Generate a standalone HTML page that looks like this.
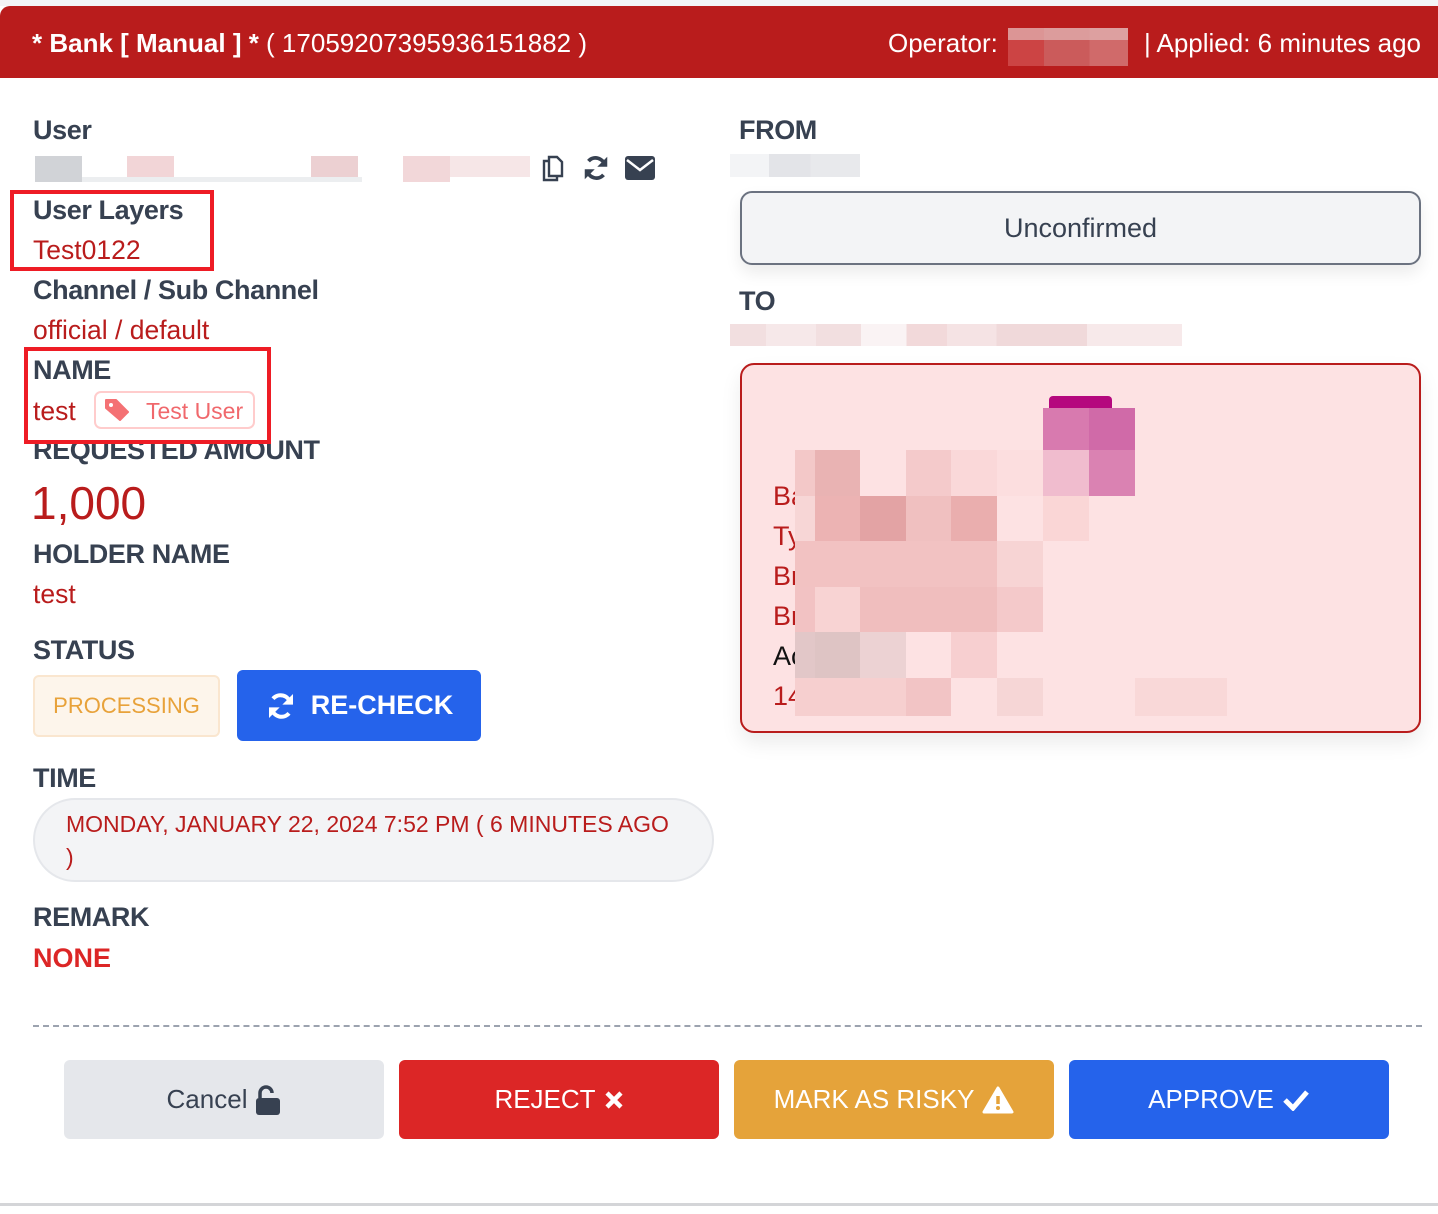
<!DOCTYPE html>
<html><head><meta charset="utf-8"><style>
*{margin:0;padding:0;box-sizing:border-box}
body{width:1438px;height:1214px;background:#fff;position:relative;overflow:hidden;font-family:"Liberation Sans",sans-serif}
.a{position:absolute;white-space:nowrap;line-height:1}
.lb{font-size:27px;font-weight:bold;color:#374151;letter-spacing:-0.4px}
.rv{font-size:26.5px;color:#b91c1c}
.c{position:absolute}
.btn{position:absolute;top:1060px;width:320px;height:79px;border-radius:6px;display:flex;align-items:center;justify-content:center;font-size:26px;color:#fff;gap:8px}
</style></head><body>
<div class="c" style="left:0;top:0;width:1438px;height:6px;background:#f3f4f6"></div>
<div class="c" style="left:0;top:6px;width:1438px;height:72px;background:#b91c1c;border-radius:10px 0 0 0"></div>
<div class="a" style="left:32px;top:30px;font-size:26px;color:#fff"><b>* Bank [ Manual ] *</b> ( 1705920739593615188​2 )</div>
<div class="a" style="left:888px;top:30px;font-size:26px;color:#fff">Operator:</div>
<div class="c" style="left:1008px;top:28px;width:120px;height:38px;background:linear-gradient(90deg,#c44 0 30%,#cb5b5b 30% 68%,#d06a6a 68%)"></div>
<div class="c" style="left:1008px;top:28px;width:120px;height:12px;background:#e3b8b8;opacity:.7"></div>
<div class="a" style="right:17px;top:30px;font-size:26px;color:#fff">| Applied: 6 minutes ago</div>

<!-- left column -->
<div class="a lb" style="left:33px;top:117px">User</div>
<div class="c" style="left:35px;top:156px;width:495px;height:26px">
 <div class="c" style="left:0;top:0;width:47px;height:26px;background:#d1d3d7"></div>
 <div class="c" style="left:47px;top:21px;width:280px;height:5px;background:#eceef0"></div>
 <div class="c" style="left:92px;top:0;width:47px;height:21px;background:#f2d5d7"></div>
 <div class="c" style="left:276px;top:0;width:47px;height:21px;background:#ecd0d2"></div>
 <div class="c" style="left:368px;top:0;width:47px;height:26px;background:#f2d7d9"></div>
 <div class="c" style="left:415px;top:0;width:80px;height:21px;background:#f6e6e7"></div>
</div>
<svg class="c" style="left:540px;top:154px" width="28" height="28" viewBox="0 0 28 28"><path d="M9 3h8l5 5v14H9z" fill="none" stroke="#374151" stroke-width="2.4"/><path d="M9 7H4v19h13v-4" fill="none" stroke="#374151" stroke-width="2.4"/></svg>
<svg class="c" style="left:581px;top:153px" width="30" height="30" viewBox="0 0 24 24"><path d="M19 10A7.5 7.5 0 0 0 6 6.5" fill="none" stroke="#374151" stroke-width="3"/><path d="M21 3v8h-8z" fill="#374151"/><path d="M5 14a7.5 7.5 0 0 0 13 3.5" fill="none" stroke="#374151" stroke-width="3"/><path d="M3 21v-8h8z" fill="#374151"/></svg>
<svg class="c" style="left:625px;top:156px" width="30" height="24" viewBox="0 0 30 24"><rect x="0" y="0" width="30" height="24" rx="3" fill="#374151"/><path d="M2 4l13 10 13-10" fill="none" stroke="#fff" stroke-width="2.5"/></svg>

<div class="a lb" style="left:33px;top:197px">User Layers</div>
<div class="a rv" style="left:33px;top:237px">Test0122</div>
<div class="c" style="left:10px;top:190px;width:204px;height:81px;border:4px solid #ee1c25"></div>

<div class="a lb" style="left:33px;top:277px">Channel / Sub Channel</div>
<div class="a rv" style="left:33px;top:317px">official / default</div>

<div class="a lb" style="left:33px;top:437px">REQUESTED AMOUNT</div>
<div class="c" style="left:28px;top:351px;width:238px;height:90px;background:#fff"></div>
<div class="a lb" style="left:33px;top:357px">NAME</div>
<div class="a rv" style="left:33px;top:398px">test</div>
<div class="c" style="left:94px;top:391px;width:161px;height:38px;border:2px solid #fcc;border-radius:7px"></div>
<svg class="c" style="left:104px;top:398px" width="26" height="24" viewBox="0 0 26 24"><path d="M2 2h10l12 12-8 8L2 10z" fill="#f47174" stroke="#f47174" stroke-linejoin="round" stroke-width="2"/><circle cx="7" cy="7" r="2" fill="#fff"/></svg>
<div class="a" style="left:146px;top:400px;font-size:23px;color:#f0686c">Test User</div>
<div class="c" style="left:24px;top:347px;width:247px;height:97px;border:4px solid #ee1c25"></div>

<div class="a" style="left:31px;top:480px;font-size:46px;color:#b91c1c">1,000</div>
<div class="a lb" style="left:33px;top:541px">HOLDER NAME</div>
<div class="a rv" style="left:33px;top:581px">test</div>
<div class="a lb" style="left:33px;top:637px">STATUS</div>
<div class="c" style="left:33px;top:675px;width:187px;height:62px;background:#fdf5eb;border:2px solid #fae6cf;border-radius:6px;display:flex;align-items:center;justify-content:center;font-size:22px;color:#e8a23a">PROCESSING</div>
<div class="c" style="left:237px;top:670px;width:244px;height:71px;background:#2563eb;border-radius:6px;display:flex;align-items:center;justify-content:center;gap:14px;color:#fff;font-size:27px;font-weight:bold">
<svg width="32" height="32" viewBox="0 0 24 24"><path d="M19 10A7.5 7.5 0 0 0 6 6.5" fill="none" stroke="#fff" stroke-width="3"/><path d="M21 3v8h-8z" fill="#fff"/><path d="M5 14a7.5 7.5 0 0 0 13 3.5" fill="none" stroke="#fff" stroke-width="3"/><path d="M3 21v-8h8z" fill="#fff"/></svg>RE-CHECK</div>
<div class="a lb" style="left:33px;top:765px">TIME</div>
<div class="c" style="left:33px;top:798px;width:681px;height:84px;background:#f3f4f6;border:2px solid #e5e7eb;border-radius:42px"></div>
<div class="a" style="left:66px;top:813px;font-size:23px;color:#b91c1c">MONDAY, JANUARY 22, 2024 7:52 PM ( 6 MINUTES AGO</div>
<div class="a" style="left:66px;top:846px;font-size:23px;color:#b91c1c">)</div>
<div class="a lb" style="left:33px;top:904px">REMARK</div>
<div class="a" style="left:33px;top:945px;font-size:27px;font-weight:bold;color:#dc2626">NONE</div>

<!-- right column -->
<div class="a lb" style="left:739px;top:117px">FROM</div>
<div class="c" style="left:730px;top:154px;width:130px;height:23px;background:linear-gradient(90deg,#f3f4f6 0 30%,#e3e4e8 30% 62%,#e8e9ec 62%)"></div>
<div class="c" style="left:740px;top:191px;width:681px;height:74px;background:#f3f4f6;border:2px solid #6b7280;border-radius:12px;display:flex;align-items:center;justify-content:center;font-size:27px;color:#374151;box-shadow:0 8px 16px rgba(0,0,0,.08)">Unconfirmed</div>
<div class="a lb" style="left:739px;top:288px">TO</div>
<div class="c" style="left:730px;top:324px;width:452px;height:22px;background:linear-gradient(90deg,#f2dfe0 0 8%,#f6e8e9 8% 19%,#f2dfe0 19% 29%,#faf3f4 29% 39%,#f2d9da 39% 48%,#f5e3e4 48% 59%,#f0d9da 59% 79%,#f7e9ea 79%)"></div>
<div class="c" style="left:740px;top:363px;width:681px;height:370px;background:#fde2e3;border:2px solid #b91c1c;border-radius:14px;box-shadow:0 10px 20px rgba(0,0,0,.08)"></div>
<div class="a" style="left:773px;top:476px;font-size:27px;color:#b91c1c;line-height:40px">Ba<br>Ty<br>Br<br>Br<br><span style="color:#111">Ac</span><br>14</div>
<div class="c" style="left:1049px;top:396px;width:63px;height:20px;background:#b5087e;border-radius:4px"></div>
<div class="c" style="left:795px;top:408px;width:440px;height:308px">
 <div class="c" style="left:248px;top:0;width:46px;height:42px;background:#d87aaf"></div>
 <div class="c" style="left:294px;top:0;width:46px;height:42px;background:#d06aa8"></div>
 <div class="c" style="left:0;top:42px;width:20px;height:46px;background:#f3c8c8"></div>
 <div class="c" style="left:20px;top:42px;width:45px;height:46px;background:#e9b3b3"></div>
 <div class="c" style="left:111px;top:42px;width:45px;height:46px;background:#f4cacb"></div>
 <div class="c" style="left:156px;top:42px;width:46px;height:46px;background:#fad8d9"></div>
 <div class="c" style="left:202px;top:42px;width:46px;height:46px;background:#fcdedf"></div>
 <div class="c" style="left:248px;top:42px;width:46px;height:46px;background:#f0bcce"></div>
 <div class="c" style="left:294px;top:42px;width:46px;height:46px;background:#da82b2"></div>
 <div class="c" style="left:0;top:88px;width:20px;height:45px;background:#f7d6d6"></div>
 <div class="c" style="left:20px;top:88px;width:45px;height:45px;background:#ecb3b3"></div>
 <div class="c" style="left:65px;top:88px;width:46px;height:45px;background:#e3a3a4"></div>
 <div class="c" style="left:111px;top:88px;width:45px;height:45px;background:#f0c0c0"></div>
 <div class="c" style="left:156px;top:88px;width:46px;height:45px;background:#eaaeae"></div>
 <div class="c" style="left:248px;top:88px;width:46px;height:45px;background:#fad6d6"></div>
 <div class="c" style="left:0;top:133px;width:202px;height:46px;background:#f2c2c2"></div>
 <div class="c" style="left:202px;top:133px;width:46px;height:46px;background:#f7d4d4"></div>
 <div class="c" style="left:0;top:179px;width:20px;height:45px;background:#f2c2c3"></div>
 <div class="c" style="left:20px;top:179px;width:45px;height:45px;background:#f8d3d3"></div>
 <div class="c" style="left:65px;top:179px;width:137px;height:45px;background:#f0bebe"></div>
 <div class="c" style="left:202px;top:179px;width:46px;height:45px;background:#f4c9ca"></div>
 <div class="c" style="left:0;top:224px;width:20px;height:46px;background:#e2c7c8"></div>
 <div class="c" style="left:20px;top:224px;width:45px;height:46px;background:#dec4c4"></div>
 <div class="c" style="left:65px;top:224px;width:46px;height:46px;background:#ecd2d3"></div>
 <div class="c" style="left:156px;top:224px;width:46px;height:46px;background:#f7cfd0"></div>
 <div class="c" style="left:0;top:270px;width:111px;height:38px;background:#f6cfcf"></div>
 <div class="c" style="left:111px;top:270px;width:45px;height:38px;background:#f2c4c5"></div>
 <div class="c" style="left:202px;top:270px;width:46px;height:38px;background:#f6d6d6"></div>
 <div class="c" style="left:340px;top:270px;width:92px;height:38px;background:#f9d8d8"></div>
</div>

<div class="c" style="left:33px;top:1025px;width:1389px;border-top:2px dashed #9ca3af"></div>
<div class="btn" style="left:64px;background:#e5e7eb;color:#374151">Cancel <svg width="26" height="30" viewBox="0 0 26 30"><path d="M5 13V8a6 6 0 0 1 12 0" fill="none" stroke="#374151" stroke-width="3.5"/><rect x="1" y="13" width="24" height="17" rx="3" fill="#374151"/></svg></div>
<div class="btn" style="left:399px;background:#dc2626">REJECT <svg width="20" height="20" viewBox="0 0 20 20"><path d="M3 3l14 14M17 3L3 17" stroke="#fff" stroke-width="4.5"/></svg></div>
<div class="btn" style="left:734px;background:#e5a33a">MARK AS RISKY <svg width="32" height="28" viewBox="0 0 32 28"><path d="M16 2L30 26H2z" fill="#fff" stroke="#fff" stroke-width="3" stroke-linejoin="round"/><path d="M16 10v8" stroke="#e5a33a" stroke-width="3.5"/><circle cx="16" cy="22" r="2" fill="#e5a33a"/></svg></div>
<div class="btn" style="left:1069px;background:#2563eb">APPROVE <svg width="28" height="22" viewBox="0 0 28 22"><path d="M3 11l8 8L25 3" fill="none" stroke="#fff" stroke-width="5"/></svg></div>
<div class="c" style="left:0;top:1203px;width:1438px;height:3px;background:#d4d5d8"></div>
</body></html>
